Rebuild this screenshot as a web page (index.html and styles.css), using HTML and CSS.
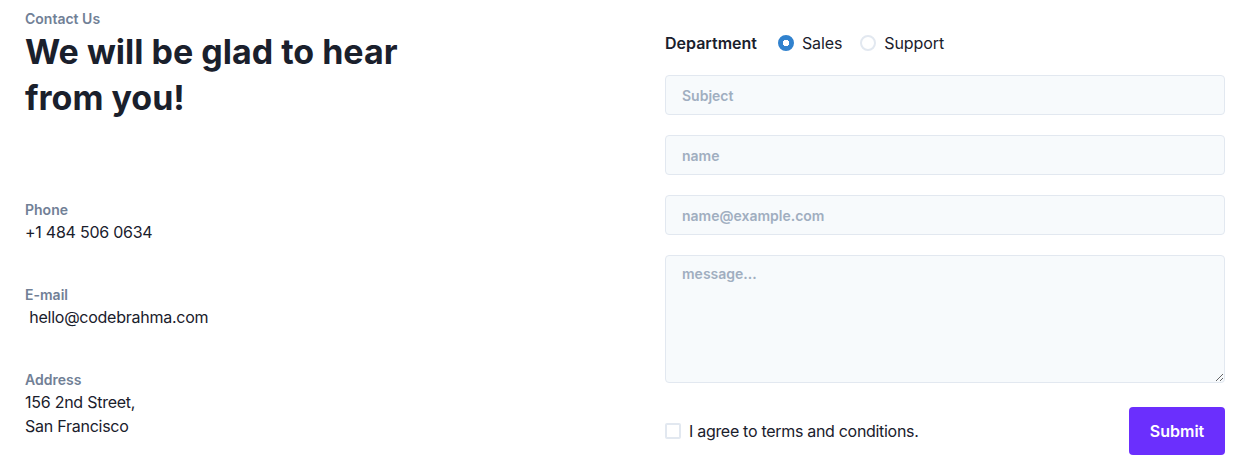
FILE: index.html
```html
<!DOCTYPE html>
<html lang="en">
<head>
<meta charset="utf-8">
<title>Contact Us</title>
<link rel="stylesheet" href="styles.css">
</head>
<body>
<div class="page">
  <section class="info">
    <p class="eyebrow">Contact Us</p>
    <h1 class="title">We will be glad to hear from you!</h1>
    <div class="details">
      <div class="item">
        <div class="label">Phone</div>
        <div class="value">+1 484 506 0634</div>
      </div>
      <div class="item">
        <div class="label">E-mail</div>
        <div class="value">&nbsp;hello@codebrahma.com</div>
      </div>
      <div class="item">
        <div class="label">Address</div>
        <div class="value">156 2nd Street,<br>San Francisco</div>
      </div>
    </div>
  </section>
  <form class="form">
    <div class="dept">
      <span class="dept-label">Department</span>
      <label class="radio"><span class="dot checked"></span>Sales</label>
      <label class="radio"><span class="dot"></span>Support</label>
    </div>
    <input class="field" type="text" placeholder="Subject">
    <input class="field" type="text" placeholder="name">
    <input class="field" type="email" placeholder="name@example.com">
    <textarea class="field area" placeholder="message..."></textarea>
    <div class="foot">
      <label class="check"><span class="box"></span>I agree to terms and conditions.</label>
      <button class="submit" type="button">Submit</button>
    </div>
  </form>
</div>
</body>
</html>
```
FILE: styles.css
```css
* { box-sizing: border-box; }
body {
  margin: 0;
  background: #fff;
  font-family: Inter, "Noto Sans", sans-serif;
  color: #1a202c;
}
.page {
  display: grid;
  grid-template-columns: 600px 560px;
  column-gap: 40px;
  padding: 9px 25px 0 25px;
}
.eyebrow {
  margin: 0;
  font-size: 14px;
  line-height: 20px;
  font-weight: 600;
  color: #718096;
}
.title {
  margin: 0;
  max-width: 400px;
  font-size: 34px;
  line-height: 46px;
  font-weight: 700;
  color: #1a202c;
}
.details {
  margin-top: 79px;
  display: flex;
  flex-direction: column;
  gap: 41px;
}
.label {
  font-size: 14px;
  line-height: 20px;
  font-weight: 600;
  color: #718096;
}
.value {
  font-size: 16px;
  line-height: 24px;
  letter-spacing: -0.25px;
  color: #1a202c;
}
.form {
  padding-top: 22px;
  display: flex;
  flex-direction: column;
  gap: 20px;
}
.dept {
  display: flex;
  align-items: center;
  height: 24px;
  font-size: 16px;
}
.dept-label {
  font-weight: 600;
  margin-right: 21px;
}
.radio {
  display: flex;
  align-items: center;
  margin-right: 18px;
  letter-spacing: -0.1px;
  color: #1a202c;
}
.dot {
  width: 16px;
  height: 16px;
  border-radius: 50%;
  border: 2px solid #e2e8f0;
  margin-right: 8px;
  background: #fff;
}
.dot.checked {
  border-color: #3182ce;
  background: radial-gradient(circle, #fff 0 3px, #3182ce 3.5px);
}
.field {
  display: block;
  width: 100%;
  height: 40px;
  border: 1px solid #e2e8f0;
  border-radius: 4px;
  background: #f7fafc;
  padding: 0 16px;
  font-family: Inter, "Noto Sans", sans-serif;
  font-size: 14px;
  font-weight: 600;
  color: #1a202c;
  outline: none;
}
.field::placeholder { color: #a0aec0; }
.area {
  height: 128px;
  padding: 8px 16px;
  line-height: 20px;
  resize: vertical;
}
.foot {
  margin-top: 4px;
  display: flex;
  align-items: center;
  justify-content: space-between;
}
.check {
  display: flex;
  align-items: center;
  font-size: 16px;
  letter-spacing: -0.3px;
  color: #1a202c;
}
.box {
  width: 16px;
  height: 16px;
  border: 2px solid #e2e8f0;
  border-radius: 2px;
  margin-right: 8px;
}
.submit {
  width: 96px;
  height: 48px;
  border: none;
  border-radius: 4px;
  background: #6b2ffd;
  color: #fff;
  font-family: Inter, "Noto Sans", sans-serif;
  font-size: 16px;
  font-weight: 600;
}
```
